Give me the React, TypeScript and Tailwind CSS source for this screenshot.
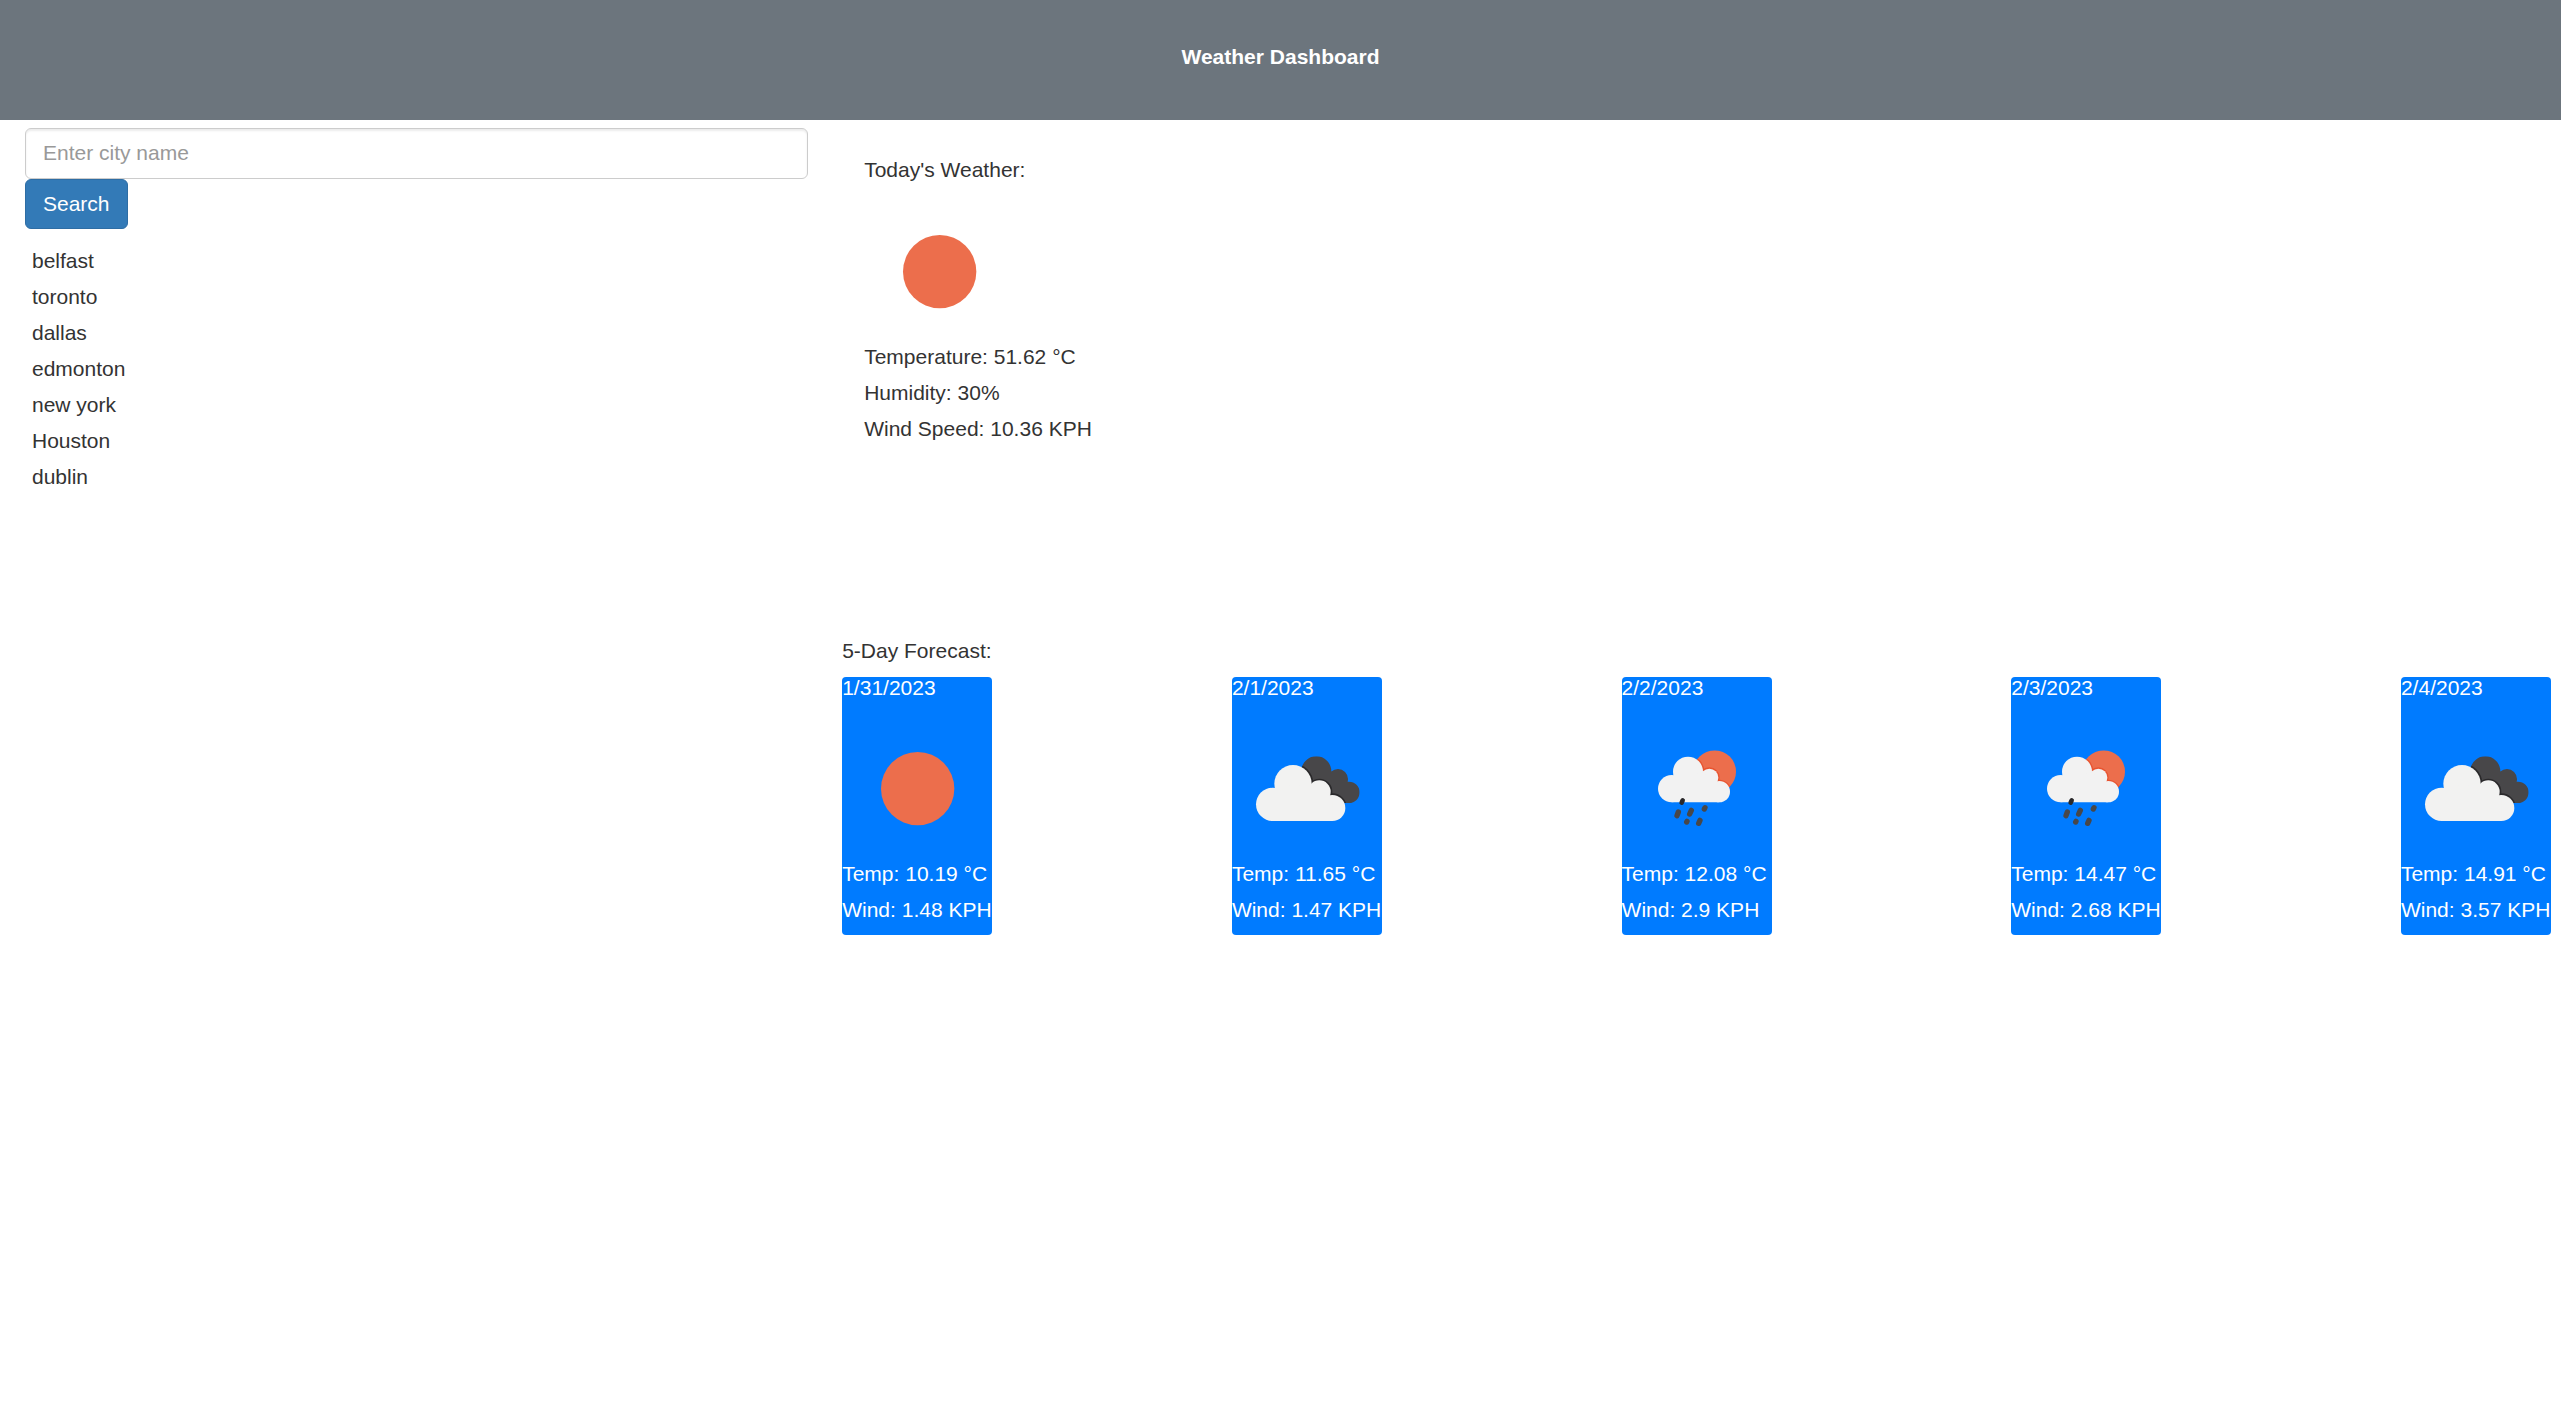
import { useId, useState } from "react";

type Condition = "clear" | "clouds" | "rain";

interface Forecast {
  date: string;
  condition: Condition;
  temp: string;
  wind: string;
}

const cities = ["belfast", "toronto", "dallas", "edmonton", "new york", "Houston", "dublin"];

const forecasts: Forecast[] = [
  { date: "1/31/2023", condition: "clear", temp: "10.19", wind: "1.48" },
  { date: "2/1/2023", condition: "clouds", temp: "11.65", wind: "1.47" },
  { date: "2/2/2023", condition: "rain", temp: "12.08", wind: "2.9" },
  { date: "2/3/2023", condition: "rain", temp: "14.47", wind: "2.68" },
  { date: "2/4/2023", condition: "clouds", temp: "14.91", wind: "3.57" },
];

function LargeCloud() {
  return (
    <>
      <circle cx="188" cy="550" r="50" />
      <circle cx="249" cy="488" r="56" />
      <circle cx="328" cy="512" r="34" />
      <circle cx="367" cy="561" r="39" />
      <path d="M188 600L188 520L249 490L320 500L367 540L367 600Z" />
    </>
  );
}

function SmallCloud() {
  return (
    <>
      <circle cx="215" cy="503" r="41" />
      <circle cx="264" cy="452" r="45" />
      <circle cx="328" cy="470" r="27" />
      <circle cx="358" cy="512" r="32" />
      <path d="M215 544L215 480L264 455L322 462L358 495L358 544Z" />
    </>
  );
}

function BrokenClouds() {
  const id = useId();
  return (
    <g>
      <clipPath id={id}>
        <circle cx="319" cy="451" r="45" />
        <circle cx="384" cy="474" r="30" />
        <circle cx="417" cy="514" r="32" />
        <path d="M300 460L362 460L395 485L417 546L340 546Z" />
      </clipPath>
      <g clipPath={`url(#${id})`}>
        <rect x="260" y="400" width="200" height="160" fill="#484749" />
        <g fill="#2a292b" stroke="#2a292b" strokeWidth="10">
          <LargeCloud />
        </g>
      </g>
      <g fill="#f2f2f1">
        <LargeCloud />
      </g>
    </g>
  );
}

function SunShower() {
  const id = useId();
  return (
    <g>
      <clipPath id={id}>
        <circle cx="344" cy="452" r="64" />
      </clipPath>
      <g clipPath={`url(#${id})`}>
        <rect x="280" y="388" width="128" height="128" fill="#ec6e4c" />
        <g fill="#e85430" stroke="#e85430" strokeWidth="8">
          <SmallCloud />
        </g>
      </g>
      <g fill="#f2f2f2">
        <SmallCloud />
      </g>
      <g fill="none" stroke="#484749" strokeWidth="16" strokeLinecap="round">
        <path d="M235 573L231 584" />
        <path d="M274 568L269 579" />
        <path d="M315 560L313 564" />
        <path d="M261 601L260 603" />
        <path d="M300 598L296 607" />
        <path d="M248 538L245 545" stroke="#29282a" strokeWidth="14" />
      </g>
    </g>
  );
}

function WeatherIcon({ condition }: { condition: Condition }) {
  return (
    <svg viewBox="66 255 450 450" className="block size-[150px]" aria-hidden="true">
      {condition === "clear" && <circle cx="293" cy="503" r="110" fill="#ec6e4c" />}
      {condition === "clouds" && <BrokenClouds />}
      {condition === "rain" && <SunShower />}
    </svg>
  );
}

function SearchPanel() {
  const [city, setCity] = useState("");
  return (
    <aside>
      <form onSubmit={(e) => e.preventDefault()}>
        <input
          type="text"
          aria-label="City name"
          placeholder="Enter city name"
          value={city}
          onChange={(e) => setCity(e.target.value)}
          className="block h-[51px] w-full rounded-md border border-[#ccc] bg-white px-[17px] pb-0.5 text-[#555] shadow-[inset_0_2px_2px_rgba(0,0,0,0.075)] placeholder:text-[#999]"
        />
        <button
          type="submit"
          className="block h-[50px] rounded-md border border-[#2e6da4] bg-[#337ab7] px-[17px] text-white"
        >
          Search
        </button>
      </form>
      <ul className="mt-3.5 pl-[7px]">
        {cities.map((name) => (
          <li key={name}>{name}</li>
        ))}
      </ul>
    </aside>
  );
}

function TodayPanel() {
  return (
    <section className="pt-6 pl-[22px]">
      <h2 className="mb-px">Today's Weather:</h2>
      <WeatherIcon condition="clear" />
      <p>Temperature: 51.62 °C</p>
      <p>Humidity: 30%</p>
      <p>Wind Speed: 10.36 KPH</p>
    </section>
  );
}

function ForecastCard({ date, condition, temp, wind }: Forecast) {
  return (
    <article className="w-[150px] rounded bg-[#007bff] pb-[7px] whitespace-nowrap text-white">
      <h3 className="mb-2 leading-[21px]">{date}</h3>
      <WeatherIcon condition={condition} />
      <p>Temp: {temp} °C</p>
      <p>Wind: {wind} KPH</p>
    </article>
  );
}

export default function App() {
  return (
    <div className="min-h-screen bg-white font-['Liberation_Sans',Arial,sans-serif] text-[21px] leading-9 text-[#333]">
      <header className="bg-[#6c757d] pt-[39px] pb-[45px] text-center text-white">
        <h1 className="font-bold">Weather Dashboard</h1>
      </header>
      <main className="grid grid-cols-[11fr_24fr] gap-[34px] pt-2 pr-2.5 pl-[25px]">
        <SearchPanel />
        <div>
          <TodayPanel />
          <section className="mt-[186px]">
            <h2 className="mb-2">5-Day Forecast:</h2>
            <div className="flex justify-between">
              {forecasts.map((day) => (
                <ForecastCard key={day.date} {...day} />
              ))}
            </div>
          </section>
        </div>
      </main>
    </div>
  );
}
